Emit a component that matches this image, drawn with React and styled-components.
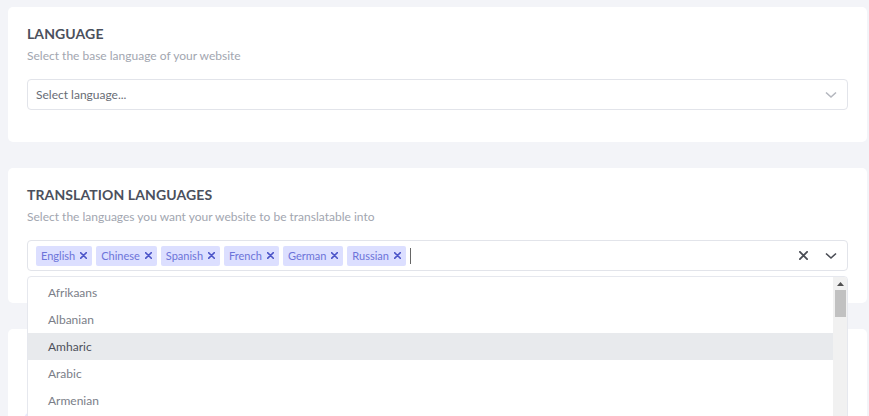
import React from 'react';
import styled, { createGlobalStyle } from 'styled-components';

const GlobalStyle = createGlobalStyle`
  html, body {
    margin: 0;
    padding: 0;
    background: #f3f4f8;
    font-family: Lato, "Noto Sans", sans-serif;
    overflow: hidden;
  }
`;

const Page = styled.div`
  display: flex;
  flex-direction: column;
  gap: 26px;
  padding: 7px 2px 0 8px;
  height: 416px;
  box-sizing: border-box;
  overflow: hidden;
`;

const Card = styled.section`
  position: relative;
  background: #fff;
  border-radius: 5px;
  padding: 18px 19px 32px 19px;
  flex-shrink: 0;
`;

const Title = styled.h2`
  margin: 0;
  font-size: 14px;
  font-weight: 700;
  letter-spacing: 0.1px;
  color: #4b505d;
  line-height: 18px;
`;

const Subtitle = styled.p`
  margin: 4px 0 14px;
  font-size: 12px;
  color: #a2a6b0;
  line-height: 18px;
`;

const SelectBox = styled.div`
  display: flex;
  align-items: center;
  height: 31px;
  border: 1px solid #e2e4ea;
  border-radius: 4px;
  padding: 0 2px 0 8px;
  box-sizing: border-box;
  background: #fff;
`;

const Placeholder = styled.span`
  flex: 1;
  font-size: 12px;
  color: #686c75;
`;

const Values = styled.div`
  flex: 1;
  display: flex;
  align-items: center;
  gap: 4px;
`;

const Chip = styled.span`
  display: inline-flex;
  align-items: center;
  height: 20px;
  padding: 0 5px 0 5px;
  gap: 5px;
  background: #dcdfff;
  border-radius: 2px;
  color: #6c74d9;
  font-size: 11px;
`;

const ChipX = styled.span`
  display: inline-flex;
  color: #4c55c8;
`;

const Caret = styled.span`
  width: 1px;
  height: 16px;
  background: #666;
`;

const IconBtn = styled.span`
  display: inline-flex;
  width: 28px;
  justify-content: center;
  color: ${p => p.$dark ? '#4a4d55' : '#b4b7be'};
`;

const Menu = styled.div`
  position: absolute;
  left: 19px;
  right: 19px;
  top: 108px;
  height: 160px;
  background: #fff;
  border: 1px solid #e6e8ee;
  border-radius: 4px;
  display: flex;
  overflow: hidden;
  z-index: 2;
`;

const Options = styled.ul`
  flex: 1;
  list-style: none;
  margin: 0;
  padding: 2px 0 0;
`;

const Option = styled.li`
  height: 27px;
  line-height: 27px;
  padding-left: 20px;
  font-size: 12px;
  color: ${p => p.$active ? '#4d515b' : '#7a7e88'};
  background: ${p => p.$active ? '#e8eaed' : 'transparent'};
`;

const Scrollbar = styled.div`
  width: 14px;
  background: #f1f1f1;
  display: flex;
  flex-direction: column;
  align-items: center;
`;

const ScrollArrow = styled.div`
  height: 13px;
  display: flex;
  align-items: center;
  justify-content: center;
`;

const Thumb = styled.div`
  width: 11px;
  height: 27px;
  background: #c1c1c1;
`;

const Button = styled.div`
  margin: 48px 0 0 -2px;
  width: 120px;
  height: 30px;
  background: #e7e9fd;
  border-radius: 4px;
`;

const Chevron = () => (
  <svg width="12" height="8" viewBox="0 0 12 8">
    <path d="M1 1.5 L6 6 L11 1.5" fill="none" stroke="currentColor" strokeWidth="1.6" />
  </svg>
);

const Cross = ({ size = 7, w = 1.8 }) => (
  <svg width={size} height={size} viewBox="0 0 10 10">
    <path d="M1 1 L9 9 M9 1 L1 9" stroke="currentColor" strokeWidth={w * 10 / size} strokeLinecap="square" />
  </svg>
);

const chips = ['English', 'Chinese', 'Spanish', 'French', 'German', 'Russian'];
const options = ['Afrikaans', 'Albanian', 'Amharic', 'Arabic', 'Armenian'];

export default function App() {
  return (
    <>
      <GlobalStyle />
      <Page>
        <Card>
          <Title>LANGUAGE</Title>
          <Subtitle>Select the base language of your website</Subtitle>
          <SelectBox>
            <Placeholder>Select language...</Placeholder>
            <IconBtn><Chevron /></IconBtn>
          </SelectBox>
        </Card>
        <Card>
          <Title>TRANSLATION LANGUAGES</Title>
          <Subtitle>Select the languages you want your website to be translatable into</Subtitle>
          <SelectBox>
            <Values>
              {chips.map(c => (
                <Chip key={c}>{c}<ChipX><Cross size={7} w={1.6} /></ChipX></Chip>
              ))}
              <Caret />
            </Values>
            <IconBtn $dark><Cross size={9} w={1.8} /></IconBtn>
            <IconBtn $dark><Chevron /></IconBtn>
          </SelectBox>
          <Menu>
            <Options>
              {options.map(o => (
                <Option key={o} $active={o === 'Amharic'}>{o}</Option>
              ))}
            </Options>
            <Scrollbar>
              <ScrollArrow>
                <svg width="7" height="4" viewBox="0 0 7 4"><path d="M0 4 L3.5 0 L7 4 Z" fill="#505050" /></svg>
              </ScrollArrow>
              <Thumb />
            </Scrollbar>
          </Menu>
        </Card>
        <Card>
          <Title>&nbsp;</Title>
          <Button />
        </Card>
      </Page>
    </>
  );
}
